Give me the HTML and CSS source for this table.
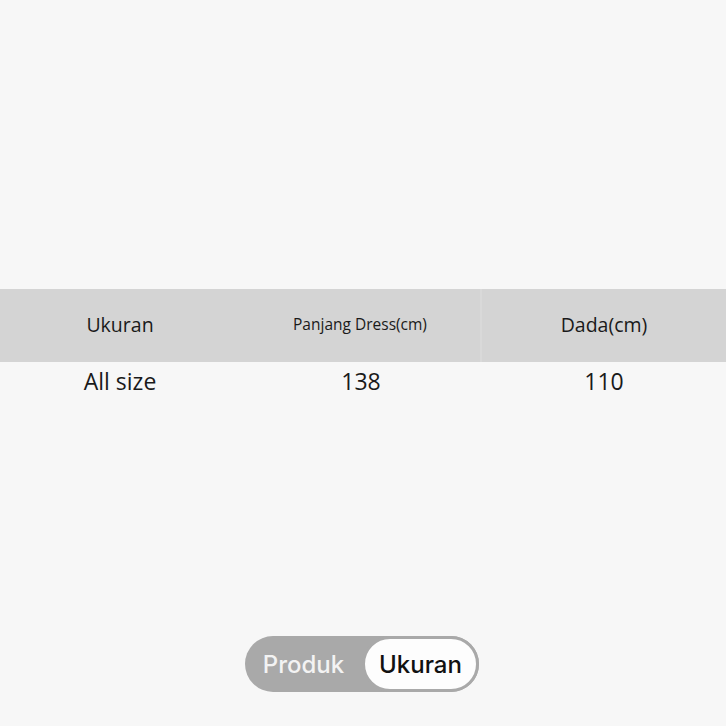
FILE: index.html
```html
<!DOCTYPE html>
<html>
<head>
<meta charset="utf-8">
<link rel="stylesheet" href="styles.css">
</head>
<body>
<div class="page">
  <div class="table">
    <div class="row head">
      <div class="cell h1">Ukuran</div>
      <div class="cell h2">Panjang Dress(cm)</div>
      <div class="cell h3">Dada(cm)</div>
    </div>
    <div class="row body">
      <div class="cell">All size</div>
      <div class="cell">138</div>
      <div class="cell">110</div>
    </div>
  </div>
  <div class="toggle-wrap">
    <div class="toggle">
      <span class="opt off">Produk</span>
      <span class="opt on">Ukuran</span>
    </div>
  </div>
</div>
</body>
</html>
```
FILE: styles.css
```css
html, body {
  margin: 0;
  padding: 0;
  background: #f7f7f7;
}
.page {
  width: 726px;
  height: 726px;
  padding-top: 289px;
  box-sizing: border-box;
  font-family: "Open Sans", "Noto Sans", sans-serif;
  color: #1a1a1a;
}
.row {
  display: grid;
  grid-template-columns: 240px 242px 244px;
}
.head {
  height: 73px;
  background: #d4d4d4;
}
.head .cell {
  display: flex;
  align-items: center;
  justify-content: center;
  font-size: 19.5px;
  padding-bottom: 3px;
}
.head .h2 { font-size: 15.5px; border-right: 2px solid #d9d9d9; }
.body {
  height: 40px;
}
.body .cell {
  display: flex;
  align-items: center;
  justify-content: center;
  font-size: 23px;
  padding-bottom: 2px;
}
.toggle-wrap {
  display: flex;
  justify-content: center;
  margin-top: 234px;
  padding-right: 2px;
}
.toggle {
  display: flex;
  align-items: stretch;
  width: 234px;
  height: 56px;
  box-sizing: border-box;
  background: #a9a9a9;
  border-radius: 28px;
  font-family: Inter, Roboto, sans-serif;
  font-weight: 500;
  font-size: 24px;
}
.opt {
  display: flex;
  align-items: center;
  justify-content: center;
}
.off {
  width: 117px;
  color: #f3f3f3;
}
.on {
  flex: 1;
  background: #fdfdfd;
  border: 3px solid #a9a9a9;
  border-radius: 28px;
  color: #111;
}
```
